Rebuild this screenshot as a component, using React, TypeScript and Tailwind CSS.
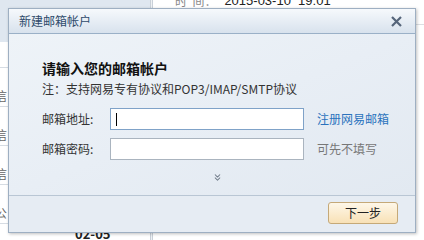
import { ChevronsDown } from "lucide-react";

const cjk = "font-['Microsoft_YaHei','Noto_Sans_CJK_SC',sans-serif]";

// ─── Page behind the dialog ──────────────────────────

function BackPage() {
  const rows = ["", "信", "信", "信", "公"];
  return (
    <div className={`flex h-[240px] w-[424px] overflow-hidden bg-white ${cjk}`}>
      <div className="flex w-[150px] flex-col">
        <div className="h-[42px] shrink-0 bg-[#dfe7f0]" />
        <div className="h-[26px] shrink-0 border-b border-[#d6dce3]" />
        {rows.slice(1).map((r, i) => (
          <div
            key={i}
            className="flex h-[39px] shrink-0 items-end border-b border-[#d6dce3] pb-[3px] text-[12px] leading-[14px] text-[#666]"
          >
            <span className="-ml-[5px]">{r}</span>
          </div>
        ))}
        <div className="mt-[3px] pl-[75px] text-[13px] font-bold leading-[14px] text-[#222]">02-05</div>
      </div>
      <div className="w-[3px] shrink-0 border-x border-[#c9d0d8] bg-[#eef1f4]" />
      <div className="flex flex-1 flex-col">
        <div className="flex h-[25px] shrink-0 items-start border-b border-[#dcdfe3] pl-[22px] text-[12px] leading-[6px] text-[#222]">
          <span className="-mt-[2px] text-[#888]">时&nbsp;&nbsp;间：</span>
          <span className="-mt-[2px] ml-[8px] font-['Liberation_Sans',sans-serif] text-[13px]">
            2015-03-10&nbsp;&nbsp;19:01
          </span>
        </div>
      </div>
    </div>
  );
}

// ─── Dialog ──────────────────────────────────────────

function Field({
  label,
  focused,
  side,
  link,
}: {
  label: string;
  focused?: boolean;
  side: string;
  link?: boolean;
}) {
  return (
    <div className="flex h-[22px] items-center">
      <span className="w-[68px] text-[12px] text-[#333]">{label}</span>
      <div
        className={`flex h-[22px] w-[194px] items-center border bg-white pl-[5px] ${
          focused ? "border-[#7fa2c8]" : "border-[#aab4bf]"
        }`}
      >
        {focused && <div className="h-[13px] w-[1px] bg-black" />}
      </div>
      <span
        className={`ml-[13px] text-[12px] ${link ? "text-[#2a73bd]" : "text-[#777]"}`}
      >
        {side}
      </span>
    </div>
  );
}

function Dialog() {
  return (
    <div
      className={`absolute left-[8px] top-[8px] flex h-[225px] w-[408px] flex-col border border-[#9eafc2] shadow-[1px_1px_3px_rgba(0,0,0,0.25)] ${cjk}`}
    >
      <div className="flex h-[25px] shrink-0 items-center justify-between border-b border-[#9ab0c7] bg-gradient-to-b from-[#f6f9fc] to-[#d8e2ed] pl-[10px] pr-[13px]">
        <span className="text-[12px] text-[#2e4a6b]">新建邮箱帐户</span>
        <svg width="11" height="11" viewBox="0 0 11 11">
          <path d="M1 1 L10 10 M10 1 L1 10" stroke="#56657a" strokeWidth="2.2" />
        </svg>
      </div>
      <div className="flex h-[161px] shrink-0 flex-col bg-gradient-to-br from-[#eef3f8] via-[#e8eef5] to-[#e2e9f1] pl-[33px] pt-[24px]">
        <div className="text-[14px] font-bold leading-[20px] text-[#111]">请输入您的邮箱帐户</div>
        <div className="mt-[3px] text-[12px] leading-[16px] text-[#333]">
          注：支持网易专有协议和POP3/IMAP/SMTP协议
        </div>
        <div className="mt-[11px] flex flex-col gap-[8px]">
          <Field label="邮箱地址:" focused side="注册网易邮箱" link />
          <Field label="邮箱密码:" side="可先不填写" />
        </div>
        <div className="mt-[12px] flex w-[350px] justify-center">
          <ChevronsDown size={11} color="#6f7a88" strokeWidth={2.2} />
        </div>
      </div>
      <div className="flex flex-1 items-start justify-end border-t border-[#b9c6d4] bg-[#e6ecf3] pr-[17px] pt-[6px]">
        <button className="h-[22px] w-[70px] rounded-[3px] border border-[#c5a978] bg-gradient-to-b from-[#fef7e8] to-[#f8e1b6] text-[12px] text-[#222]">
          下一步
        </button>
      </div>
    </div>
  );
}

export default function App() {
  return (
    <div className="relative h-[240px] w-[424px] overflow-hidden">
      <BackPage />
      <Dialog />
    </div>
  );
}
